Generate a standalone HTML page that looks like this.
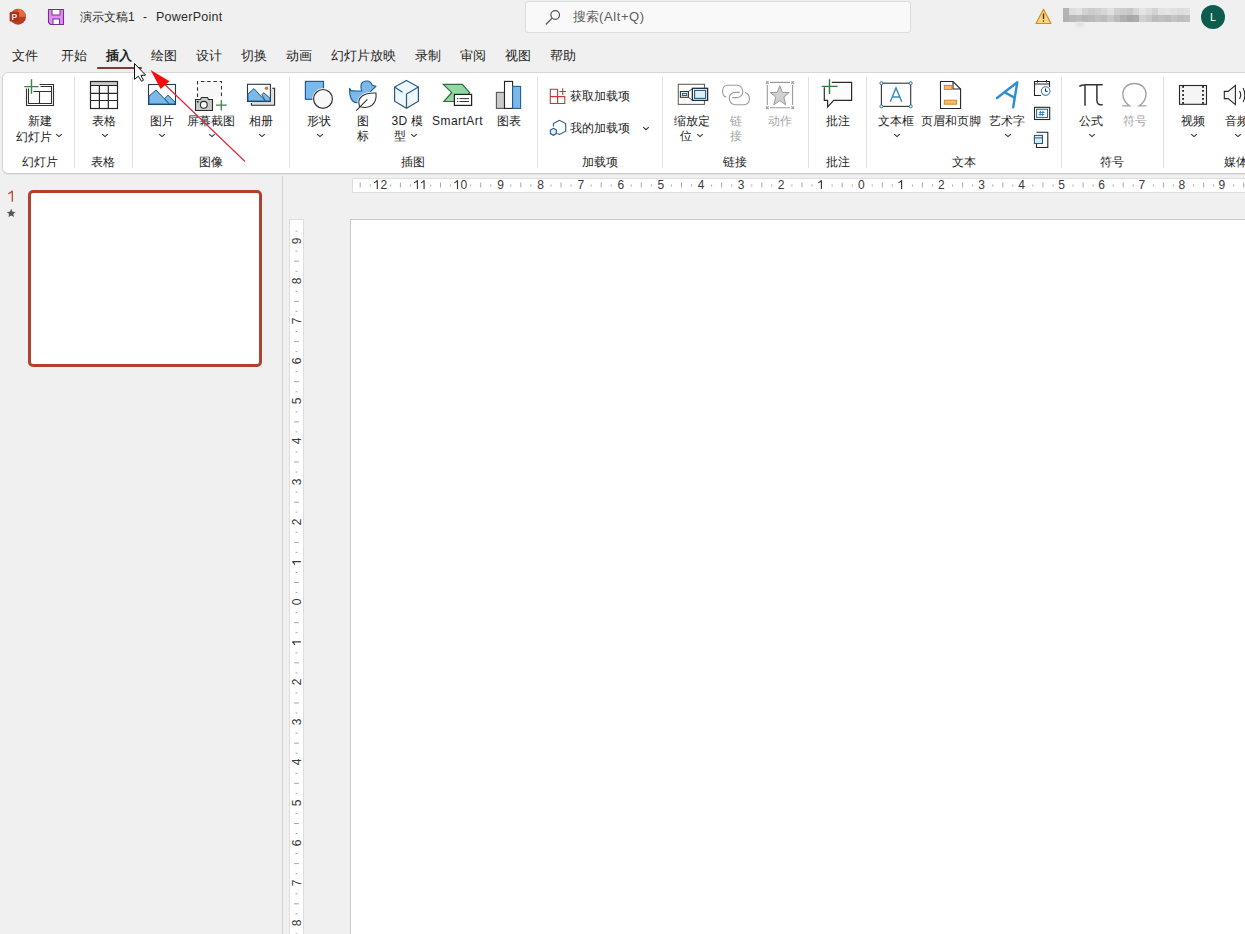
<!DOCTYPE html>
<html><head><meta charset="utf-8">
<style>
*{margin:0;padding:0;box-sizing:border-box}
html,body{width:1245px;height:934px;overflow:hidden;background:#f0f0f0;font-family:"Liberation Sans",sans-serif;color:#242424}
.a{position:absolute;white-space:nowrap}
.t13{font-size:13px;line-height:13px;font-weight:500}
.t12{font-size:12px;line-height:12px;font-weight:500}
.grey{color:#a6a6a6}
.lb{font-size:12px;line-height:12px;font-weight:500}
.rn{font-size:12px;line-height:12px;color:#3a3a3a}
svg{position:absolute;overflow:visible}
</style></head><body>
<!-- title bar -->
<div class="a t12" style="left:80px;top:11px;font-weight:400;color:#2b2b2b">演示文稿1</div>
<div class="a t12" style="left:143px;top:11px;font-weight:400">-</div>
<div class="a" style="left:156px;top:10.5px;font-size:12.5px;line-height:13px;letter-spacing:0.25px;color:#2b2b2b">PowerPoint</div>
<div class="a" style="left:525px;top:1px;width:386px;height:32px;background:#f9f9f9;border:1px solid #dcdcdc;border-radius:3px"></div>
<div class="a t13" style="left:573px;top:10px;color:#5e5e5e;font-weight:400">搜索<span style="letter-spacing:0.6px">(Alt+Q)</span></div>
<div class="a" style="left:1201px;top:5px;width:24px;height:24px;border-radius:50%;background:#0e5c4d;color:#fff;font-size:11px;line-height:24px;text-align:center">L</div>
<!-- tabs -->
<div class="a t13" style="left:12px;top:49px">文件</div>
<div class="a t13" style="left:61px;top:49px">开始</div>
<div class="a t13" style="left:106px;top:49px;font-weight:700">插入</div>
<div class="a t13" style="left:151px;top:49px">绘图</div>
<div class="a t13" style="left:196px;top:49px">设计</div>
<div class="a t13" style="left:241px;top:49px">切换</div>
<div class="a t13" style="left:286px;top:49px">动画</div>
<div class="a t13" style="left:331px;top:49px">幻灯片放映</div>
<div class="a t13" style="left:415px;top:49px">录制</div>
<div class="a t13" style="left:460px;top:49px">审阅</div>
<div class="a t13" style="left:505px;top:49px">视图</div>
<div class="a t13" style="left:550px;top:49px">帮助</div>
<div class="a" style="left:97px;top:67px;width:45px;height:2px;background:#80392e;border-radius:1px"></div>
<!-- ribbon -->
<div class="a" style="left:2px;top:72px;width:1260px;height:102px;background:#fff;border:1px solid #d6d6d6;border-bottom:1px solid #cbcbcb;border-radius:6px;box-shadow:0 1px 1px rgba(0,0,0,0.05)"></div>
<div class="a lb" style="left:-10px;top:115px;width:100px;text-align:center">新建</div>
<div class="a lb" style="left:16px;top:131px">幻灯片</div>
<div class="a lb" style="left:54px;top:115px;width:100px;text-align:center">表格</div>
<div class="a lb" style="left:112px;top:115px;width:100px;text-align:center">图片</div>
<div class="a lb" style="left:161px;top:115px;width:100px;text-align:center">屏幕截图</div>
<div class="a lb" style="left:211px;top:115px;width:100px;text-align:center">相册</div>
<div class="a lb" style="left:269px;top:115px;width:100px;text-align:center">形状</div>
<div class="a lb" style="left:313px;top:115px;width:100px;text-align:center">图</div>
<div class="a lb" style="left:313px;top:130px;width:100px;text-align:center">标</div>
<div class="a lb" style="left:391.5px;top:115px;letter-spacing:0.4px">3D</div><div class="a lb" style="left:410.5px;top:115px">模</div>
<div class="a lb" style="left:350px;top:130px;width:100px;text-align:center">型</div>
<div class="a lb" style="left:432px;top:115px;letter-spacing:0.45px">SmartArt</div>
<div class="a lb" style="left:458.5px;top:115px;width:100px;text-align:center">图表</div>
<div class="a lb" style="left:642px;top:115px;width:100px;text-align:center">缩放定</div>
<div class="a lb" style="left:636px;top:130px;width:100px;text-align:center">位</div>
<div class="a lb grey" style="left:686px;top:115px;width:100px;text-align:center">链</div>
<div class="a lb grey" style="left:686px;top:130px;width:100px;text-align:center">接</div>
<div class="a lb grey" style="left:730px;top:115px;width:100px;text-align:center">动作</div>
<div class="a lb" style="left:788px;top:115px;width:100px;text-align:center">批注</div>
<div class="a lb" style="left:846px;top:115px;width:100px;text-align:center">文本框</div>
<div class="a lb" style="left:901px;top:115px;width:100px;text-align:center">页眉和页脚</div>
<div class="a lb" style="left:957px;top:115px;width:100px;text-align:center">艺术字</div>
<div class="a lb" style="left:1041px;top:115px;width:100px;text-align:center">公式</div>
<div class="a lb grey" style="left:1085px;top:115px;width:100px;text-align:center">符号</div>
<div class="a lb" style="left:1143px;top:115px;width:100px;text-align:center">视频</div>
<div class="a lb" style="left:1187px;top:115px;width:100px;text-align:center">音频</div>
<div class="a lb" style="left:-10px;top:156px;width:100px;text-align:center">幻灯片</div>
<div class="a lb" style="left:53px;top:156px;width:100px;text-align:center">表格</div>
<div class="a lb" style="left:161px;top:156px;width:100px;text-align:center">图像</div>
<div class="a lb" style="left:363px;top:156px;width:100px;text-align:center">插图</div>
<div class="a lb" style="left:550px;top:156px;width:100px;text-align:center">加载项</div>
<div class="a lb" style="left:685px;top:156px;width:100px;text-align:center">链接</div>
<div class="a lb" style="left:788px;top:156px;width:100px;text-align:center">批注</div>
<div class="a lb" style="left:914px;top:156px;width:100px;text-align:center">文本</div>
<div class="a lb" style="left:1062px;top:156px;width:100px;text-align:center">符号</div>
<div class="a lb" style="left:1224px;top:156px">媒体</div>
<svg style="left:0;top:0" width="1" height="1"><path d="M56.2,134.1 L59.0,136.6 L61.8,134.1" fill="none" stroke="#2e2e2e" stroke-width="1.05"/></svg>
<svg style="left:0;top:0" width="1" height="1"><path d="M102.2,134.1 L105.0,136.6 L107.8,134.1" fill="none" stroke="#2e2e2e" stroke-width="1.05"/></svg>
<svg style="left:0;top:0" width="1" height="1"><path d="M159.2,134.1 L162.0,136.6 L164.8,134.1" fill="none" stroke="#2e2e2e" stroke-width="1.05"/></svg>
<svg style="left:0;top:0" width="1" height="1"><path d="M209.2,134.1 L212.0,136.6 L214.8,134.1" fill="none" stroke="#2e2e2e" stroke-width="1.05"/></svg>
<svg style="left:0;top:0" width="1" height="1"><path d="M259.2,134.1 L262.0,136.6 L264.8,134.1" fill="none" stroke="#2e2e2e" stroke-width="1.05"/></svg>
<svg style="left:0;top:0" width="1" height="1"><path d="M317.2,134.1 L320.0,136.6 L322.8,134.1" fill="none" stroke="#2e2e2e" stroke-width="1.05"/></svg>
<svg style="left:0;top:0" width="1" height="1"><path d="M411.2,134.1 L414.0,136.6 L416.8,134.1" fill="none" stroke="#2e2e2e" stroke-width="1.05"/></svg>
<svg style="left:0;top:0" width="1" height="1"><path d="M697.2,134.1 L700.0,136.6 L702.8,134.1" fill="none" stroke="#2e2e2e" stroke-width="1.05"/></svg>
<svg style="left:0;top:0" width="1" height="1"><path d="M894.2,134.1 L897.0,136.6 L899.8,134.1" fill="none" stroke="#2e2e2e" stroke-width="1.05"/></svg>
<svg style="left:0;top:0" width="1" height="1"><path d="M1005.2,134.1 L1008.0,136.6 L1010.8,134.1" fill="none" stroke="#2e2e2e" stroke-width="1.05"/></svg>
<svg style="left:0;top:0" width="1" height="1"><path d="M1089.2,134.1 L1092.0,136.6 L1094.8,134.1" fill="none" stroke="#2e2e2e" stroke-width="1.05"/></svg>
<svg style="left:0;top:0" width="1" height="1"><path d="M1191.2,134.1 L1194.0,136.6 L1196.8,134.1" fill="none" stroke="#2e2e2e" stroke-width="1.05"/></svg>
<svg style="left:0;top:0" width="1" height="1"><path d="M1235.2,134.1 L1238.0,136.6 L1240.8,134.1" fill="none" stroke="#2e2e2e" stroke-width="1.05"/></svg>
<div class="a" style="left:74px;top:77px;width:1px;height:91px;background:#e1e1e1"></div>
<div class="a" style="left:132px;top:77px;width:1px;height:91px;background:#e1e1e1"></div>
<div class="a" style="left:289px;top:77px;width:1px;height:91px;background:#e1e1e1"></div>
<div class="a" style="left:537px;top:77px;width:1px;height:91px;background:#e1e1e1"></div>
<div class="a" style="left:662px;top:77px;width:1px;height:91px;background:#e1e1e1"></div>
<div class="a" style="left:808px;top:77px;width:1px;height:91px;background:#e1e1e1"></div>
<div class="a" style="left:866px;top:77px;width:1px;height:91px;background:#e1e1e1"></div>
<div class="a" style="left:1061px;top:77px;width:1px;height:91px;background:#e1e1e1"></div>
<div class="a" style="left:1163px;top:77px;width:1px;height:91px;background:#e1e1e1"></div>
<!-- addins -->
<div class="a lb" style="left:570px;top:90px">获取加载项</div>
<div class="a lb" style="left:570px;top:122px">我的加载项</div>
<svg style="left:0;top:0" width="1" height="1"><path d="M643.2,127.2 L646.0,129.7 L648.8,127.2" fill="none" stroke="#2e2e2e" stroke-width="1.05"/></svg>
<!-- ICONS -->
<svg style="left:0;top:0" width="1245" height="934" viewBox="0 0 1245 934">
<!-- new slide -->
<g fill="none" stroke="#333" stroke-width="1.1">
<path d="M39.5,84.5 H53.5 V105.5 H26.5 V88.5"/>
<path d="M40.5,86.5 H51.5 V103.5 H28.5 V88.5"/>
<path d="M33.5,91.5 H51.5 M39.5,91.5 V103.5"/>
</g>
<g stroke="#3b8548" stroke-width="1.4" fill="none"><path d="M24.3,86.6 H38.6 M31.5,79.2 V93.8"/></g>
<!-- table -->
<rect x="90.5" y="81.5" width="27" height="4" fill="#c9c9c9"/>
<g fill="none" stroke="#262626" stroke-width="1.2">
<rect x="90.5" y="81.5" width="27" height="27"/>
<path d="M90.5,85.5 H117.5 M90.5,93.3 H117.5 M90.5,100.5 H117.5 M99.4,85.5 V108.5 M108.3,85.5 V108.5"/>
</g>
<!-- picture -->
<rect x="148.5" y="84.5" width="27" height="20" fill="#fff" stroke="#1f3a52" stroke-width="1.1"/>
<path d="M149,96.2 L156,90 L169.4,104 H149 Z" fill="#7cb9e8" stroke="#1e5a8c" stroke-width="1"/>
<path d="M164.7,98.5 L168,95.2 L175,102 V104 H169.4 Z" fill="#7cb9e8" stroke="#1e5a8c" stroke-width="1"/>
<!-- screenshot -->
<path d="M197.5,97 V81.5 H221.5 V97" fill="#f7f7f7" stroke="#333" stroke-width="1.1" stroke-dasharray="3.5,2.8"/>
<path d="M195.5,99.5 H200.5 L201.5,97.5 H207.5 L208.5,99.5 H212.5 V110.5 H195.5 Z" fill="#c9c9c9" stroke="#2a2a2a" stroke-width="1.1"/>
<circle cx="203.8" cy="104.8" r="3.4" fill="#fff" stroke="#2a2a2a" stroke-width="1.1"/>
<rect x="197" y="101" width="1.6" height="1.6" fill="#222"/>
<path d="M216,105.1 H226.8 M221.3,100 V110.6" stroke="#3b8548" stroke-width="1.3"/>
<!-- album -->
<path d="M272.2,88.3 H274.6 V105.2 H251.4 V103" fill="#e0e0e0" stroke="#2a2a2a" stroke-width="1.1"/>
<rect x="247.5" y="84.3" width="22.9" height="17.2" fill="#fff" stroke="#1f3a52" stroke-width="1.1"/>
<path d="M248,94.1 L254,88.6 L265.3,101 H248 Z" fill="#7cb9e8" stroke="#1e5a8c" stroke-width="1"/>
<path d="M261.9,94.8 L263.6,92.7 L270,98.2 V101 H265.3 Z" fill="#7cb9e8" stroke="#1e5a8c" stroke-width="1"/>
<circle cx="266.5" cy="88.3" r="1.7" fill="#c07a3a"/>
<!-- shapes -->
<rect x="305.4" y="81.4" width="18.1" height="17.9" fill="#7cb9e8" stroke="#1d5d99" stroke-width="1.2"/>
<circle cx="323" cy="98.9" r="10.6" fill="#fff"/>
<circle cx="323" cy="98.9" r="9.4" fill="#f8f8f8" stroke="#333" stroke-width="1.2"/>
<!-- icons duck+leaf -->
<path d="M349.6,88.4 L350.9,90.6 C354,91.2 358,91.1 361.8,90.9 C361.1,89.6 360.9,88 360.9,86.6 A5.7,5.7 0 0 1 372.1,85.2 L376,86.4 L371.2,90.9 C370.5,93 368.5,94.5 367.2,95.8 C365,99.5 361,103 356.4,102.7 C351.5,102 349.4,96 349.6,88.4 Z" fill="#7cb9e8" stroke="#1d5d99" stroke-width="1.1" stroke-linejoin="round"/>
<path d="M359.5,106.5 C356.5,97 364,92.5 376,93 C377,103 371,110 359.5,106.5 Z" fill="#fff" stroke="#fff" stroke-width="2.6"/>
<path d="M359.5,106.5 C356.5,97 364,92.5 376,93 C377,103 371,110 359.5,106.5 Z" fill="#fff" stroke="#333" stroke-width="1.1"/>
<path d="M356.2,110.6 L367.4,99.4" stroke="#333" stroke-width="1.1"/>
<!-- 3D cube -->
<path d="M406.5,80.4 L418.4,87 V101.2 L406.5,108.2 L394.6,101.2 V87 Z" fill="#eef7fd" stroke="#2a5a80" stroke-width="1.2"/>
<path d="M394.6,87 L402.5,92.2 M418.4,87 L406.5,94.1 V108.2" fill="none" stroke="#2a5a80" stroke-width="1.2"/>
<!-- SmartArt -->
<path d="M443.3,84.3 H462.3 L469.7,92.7 L462.3,101.5 H443.8 L451.7,92.7 Z" fill="#92d8a2" stroke="#2e6b3e" stroke-width="1.2"/>
<rect x="454.4" y="94.4" width="17.2" height="11" fill="#fff" stroke="#222" stroke-width="1.2"/>
<path d="M457,98.6 H458.3 M459.5,98.6 H469 M457,101.5 H458.3 M459.5,101.5 H469" stroke="#333" stroke-width="1"/>
<!-- chart -->
<rect x="496.4" y="92.4" width="8.1" height="16" fill="#c9c9c9" stroke="#555" stroke-width="1.1"/>
<rect x="504.5" y="81.4" width="8.1" height="27" fill="#fff" stroke="#222" stroke-width="1.1"/>
<rect x="512.6" y="86.4" width="8" height="22" fill="#7cb9e8" stroke="#1d5d99" stroke-width="1.1"/>
<!-- get addins -->
<g fill="none" stroke="#c0393b" stroke-width="1.1">
<path d="M557.6,96.6 V89.3 H550.3 V103.5 H564.8 V96.6 H550.3 M557.6,96.6 V103.5"/>
<path d="M559.4,91.5 H566 M562.7,88.2 V94.8"/>
</g>
<!-- my addins -->
<path d="M553.4,126.5 V123.6 L559.4,120.3 L565.7,123.5 V131.2 L559.4,134.4 L557.5,133.5" fill="none" stroke="#2a5a80" stroke-width="1.1"/>
<path d="M553.4,128.3 L556.4,130 V133.6 L553.4,135.3 L550.4,133.6 V130 Z" fill="#dcefff" stroke="#2a5a80" stroke-width="1.1"/>
<!-- zoom -->
<rect x="678.3" y="84.3" width="26.2" height="20.1" fill="#fff" stroke="#6b625c" stroke-width="1.1"/>
<path d="M688.4,91.5 L692.4,88.8 M688.4,97.3 L692.4,100.2" stroke="#555" stroke-width="1"/>
<rect x="680.4" y="91.5" width="8" height="5.8" fill="#fff" stroke="#333" stroke-width="1.1"/>
<rect x="682.3" y="93.4" width="4.4" height="2.1" fill="#d8f0fc" stroke="#2a5a80" stroke-width="1"/>
<rect x="692.4" y="88.3" width="15.2" height="12.1" fill="#fff" stroke="#1e2f3a" stroke-width="1.3"/>
<rect x="694.6" y="90.4" width="11" height="8" fill="#d8f0fc" stroke="#2a5a80" stroke-width="1.1"/>
<!-- link grey -->
<g fill="none" stroke="#9c9c9c" stroke-width="1.1">
<path d="M726.5,97.3 C721,95.5 721,85.5 728,85.3 H736.8 C743,85.5 744,93 741,96 C740,97.2 738.5,97.6 736.5,97.6 H732.3"/>
<path d="M745,92.6 C751,94.5 751,104.5 744,104.7 H735.2 C729,104.5 728,97 731,94 C732,92.8 733.5,92.4 735.5,92.4 H739.7"/>
</g>
<!-- action grey -->
<g fill="none" stroke="#9c9c9c" stroke-width="1.1">
<path d="M770,82.4 H790 M767.3,85 V105 M792.6,85 V105 M770,107.7 H790"/>
<path d="M766,81.2 L768.6,83.8 M766,83.8 L768.6,81.2 M791.4,81.2 L794,83.8 M791.4,83.8 L794,81.2 M766,106.4 L768.6,109 M766,109 L768.6,106.4 M791.4,106.4 L794,109 M791.4,109 L794,106.4"/>
</g>
<path d="M779.8,85.8 L782.4,92.3 L789.2,92.6 L783.9,97 L785.7,104.8 L779.8,100.6 L773.9,104.8 L775.7,97 L770.4,92.6 L777.2,92.3 Z" fill="#d0d0d0" stroke="#9a9a9a" stroke-width="1"/>
<!-- comment -->
<path d="M831.8,82.4 H851.6 V100.3 H833.7 L827.6,107 V100.3 H824.3 V87.2" fill="#fbfbfb" stroke="#2a2a2a" stroke-width="1.2"/>
<path d="M821.8,86.4 H837.6 M829.5,79.3 V94.1" stroke="#2f7a3e" stroke-width="1.4"/>
<!-- textbox -->
<rect x="881.4" y="83.2" width="29.3" height="23.2" fill="#fdfdfd" stroke="#333" stroke-width="1.1"/>
<g fill="#fff" stroke="#2a7090" stroke-width="1">
<circle cx="881.4" cy="83.2" r="1.5"/><circle cx="910.7" cy="83.2" r="1.5"/><circle cx="881.4" cy="106.4" r="1.5"/><circle cx="910.7" cy="106.4" r="1.5"/>
</g>
<path d="M890.3,101.7 L896,87.9 L901.8,101.7 M892.4,97 H899.6" fill="none" stroke="#3a8abf" stroke-width="1.4"/>
<!-- header footer -->
<path d="M940.5,81.5 H953 L960.6,89 V108.5 H940.5 Z" fill="#fff" stroke="#262626" stroke-width="1.1"/>
<path d="M953,81.5 V89 H960.6" fill="none" stroke="#262626" stroke-width="1.1"/>
<rect x="944.3" y="85.4" width="7.6" height="4" fill="#f6bb6a" stroke="#d8861e" stroke-width="1"/>
<rect x="944.3" y="100.2" width="12.3" height="4" fill="#f6bb6a" stroke="#d8861e" stroke-width="1"/>
<!-- wordart -->
<path d="M997,98 L1017.3,82.3 L1013.2,107.3 M1005.5,92.7 L1014.4,97.6" fill="none" stroke="#2e8fd0" stroke-width="2.4" stroke-linecap="round" stroke-linejoin="round"/>
<!-- date/time -->
<path d="M1041,95.5 H1034.5 V81.5 H1049.5 V87" fill="none" stroke="#262626" stroke-width="1.1"/>
<path d="M1034.5,84 H1049.5 M1037.5,80 V82.5 M1046.5,80 V82.5" stroke="#262626" stroke-width="1"/>
<circle cx="1045.7" cy="91.1" r="4.3" fill="#fff" stroke="#2e7fc0" stroke-width="1.1"/>
<path d="M1045.5,88.5 V91.3 H1047.8" fill="none" stroke="#262626" stroke-width="1"/>
<!-- slide number -->
<rect x="1034.5" y="107.3" width="15.2" height="12.2" fill="#fff" stroke="#262626" stroke-width="1.1"/>
<rect x="1036.6" y="109.2" width="11" height="8.2" fill="#fff" stroke="#2a5a80" stroke-width="1"/>
<path d="M1040.5,110.8 L1040,116 M1043,110.8 L1042.5,116 M1038.8,112.4 H1044.6 M1038.5,114.5 H1044.3" stroke="#2e7fc0" stroke-width="0.9"/>
<!-- object -->
<path d="M1036.5,132.3 H1047.8 V147.5 H1036.5 V144" fill="none" stroke="#262626" stroke-width="1.1"/>
<rect x="1034.4" y="135.4" width="8.1" height="8.1" fill="#d8f0fc" stroke="#2a5a80" stroke-width="1.1"/>
<path d="M1034.4,137.9 H1042.5" stroke="#2a5a80" stroke-width="1"/>
<!-- pi -->
<path d="M1079.3,86.5 C1081,85 1083,84.8 1086,84.8 H1102.7" fill="none" stroke="#333" stroke-width="1.5"/>
<path d="M1085,85 V105.8" stroke="#333" stroke-width="1.5"/>
<path d="M1096.9,85 V100.5 C1097,104 1099,105 1102.7,104.8" fill="none" stroke="#333" stroke-width="1.5"/>
<!-- omega grey -->
<path d="M1122.2,105.9 H1129.6 C1124,102 1122.8,97.5 1122.8,94 C1122.8,88 1127.5,83.5 1134.4,83.5 C1141.3,83.5 1146,88 1146,94 C1146,97.5 1144.8,102 1139.2,105.9 H1146.5" fill="none" stroke="#a3a3a3" stroke-width="1.4"/>
<!-- video -->
<rect x="1179.5" y="85.5" width="27" height="18.8" fill="#f5f5f5" stroke="#262626" stroke-width="1.1"/>
<g fill="#222">
<rect x="1182.2" y="86" width="1.8" height="1.8"/><rect x="1182.2" y="90" width="1.8" height="1.8"/><rect x="1182.2" y="94.1" width="1.8" height="1.8"/><rect x="1182.2" y="98" width="1.8" height="1.8"/><rect x="1182.2" y="102" width="1.8" height="1.8"/>
<rect x="1202.1" y="86" width="1.8" height="1.8"/><rect x="1202.1" y="90" width="1.8" height="1.8"/><rect x="1202.1" y="94.1" width="1.8" height="1.8"/><rect x="1202.1" y="98" width="1.8" height="1.8"/><rect x="1202.1" y="102" width="1.8" height="1.8"/>
</g>
<!-- audio -->
<path d="M1224.3,91.4 H1228.1 L1235.4,85.4 V104.6 L1228.1,98.6 H1224.3 Z" fill="#f5f5f5" stroke="#262626" stroke-width="1.1"/>
<path d="M1239.5,91 C1241,93.5 1241,96.5 1239.5,99 M1243,88 C1245.5,92 1245.5,98 1243,102" fill="none" stroke="#262626" stroke-width="1.1"/>
</svg>

<!-- thumbnails -->
<div class="a" style="left:282px;top:176px;width:1px;height:758px;background:#d2d2d2"></div>
<div class="a" style="left:28px;top:190px;width:234px;height:177px;background:#fff;border:3px solid #b1402f;border-radius:5px"></div>
<svg style="left:0;top:0" width="1" height="1"><path d="M12.3,190.8 V201.8 M12.3,190.8 C11.2,192.3 9.8,193.2 8.3,193.8" fill="none" stroke="#b8492d" stroke-width="1.3"/></svg>
<!-- rulers -->
<div class="a" style="left:352px;top:178px;width:900px;height:15px;background:#fff;border:1px solid #dedede"></div>
<div class="a" style="left:289px;top:219px;width:15px;height:720px;background:#fff;border:1px solid #dedede"></div>
<!-- rulerdetail -->
<div class="a rn" style="left:368.8px;top:179px;width:30px;text-align:center">2</div>
<div class="a rn" style="left:448.9px;top:179px;width:30px;text-align:center">0</div>
<div class="a rn" style="left:485.7px;top:179px;width:30px;text-align:center">9</div>
<div class="a rn" style="left:525.7px;top:179px;width:30px;text-align:center">8</div>
<div class="a rn" style="left:565.8px;top:179px;width:30px;text-align:center">7</div>
<div class="a rn" style="left:605.9px;top:179px;width:30px;text-align:center">6</div>
<div class="a rn" style="left:645.9px;top:179px;width:30px;text-align:center">5</div>
<div class="a rn" style="left:686.0px;top:179px;width:30px;text-align:center">4</div>
<div class="a rn" style="left:726.1px;top:179px;width:30px;text-align:center">3</div>
<div class="a rn" style="left:766.2px;top:179px;width:30px;text-align:center">2</div>
<div class="a rn" style="left:846.3px;top:179px;width:30px;text-align:center">0</div>
<div class="a rn" style="left:926.4px;top:179px;width:30px;text-align:center">2</div>
<div class="a rn" style="left:966.5px;top:179px;width:30px;text-align:center">3</div>
<div class="a rn" style="left:1006.6px;top:179px;width:30px;text-align:center">4</div>
<div class="a rn" style="left:1046.6px;top:179px;width:30px;text-align:center">5</div>
<div class="a rn" style="left:1086.7px;top:179px;width:30px;text-align:center">6</div>
<div class="a rn" style="left:1126.8px;top:179px;width:30px;text-align:center">7</div>
<div class="a rn" style="left:1166.9px;top:179px;width:30px;text-align:center">8</div>
<div class="a rn" style="left:1206.9px;top:179px;width:30px;text-align:center">9</div>
<div class="a rn" style="left:281.5px;top:234.8px;width:30px;text-align:center;transform:rotate(-90deg)">9</div>
<div class="a rn" style="left:281.5px;top:274.9px;width:30px;text-align:center;transform:rotate(-90deg)">8</div>
<div class="a rn" style="left:281.5px;top:315.1px;width:30px;text-align:center;transform:rotate(-90deg)">7</div>
<div class="a rn" style="left:281.5px;top:355.2px;width:30px;text-align:center;transform:rotate(-90deg)">6</div>
<div class="a rn" style="left:281.5px;top:395.3px;width:30px;text-align:center;transform:rotate(-90deg)">5</div>
<div class="a rn" style="left:281.5px;top:435.4px;width:30px;text-align:center;transform:rotate(-90deg)">4</div>
<div class="a rn" style="left:281.5px;top:475.5px;width:30px;text-align:center;transform:rotate(-90deg)">3</div>
<div class="a rn" style="left:281.5px;top:515.7px;width:30px;text-align:center;transform:rotate(-90deg)">2</div>
<div class="a rn" style="left:281.5px;top:595.9px;width:30px;text-align:center;transform:rotate(-90deg)">0</div>
<div class="a rn" style="left:281.5px;top:676.1px;width:30px;text-align:center;transform:rotate(-90deg)">2</div>
<div class="a rn" style="left:281.5px;top:716.3px;width:30px;text-align:center;transform:rotate(-90deg)">3</div>
<div class="a rn" style="left:281.5px;top:756.4px;width:30px;text-align:center;transform:rotate(-90deg)">4</div>
<div class="a rn" style="left:281.5px;top:796.5px;width:30px;text-align:center;transform:rotate(-90deg)">5</div>
<div class="a rn" style="left:281.5px;top:836.6px;width:30px;text-align:center;transform:rotate(-90deg)">6</div>
<div class="a rn" style="left:281.5px;top:876.7px;width:30px;text-align:center;transform:rotate(-90deg)">7</div>
<div class="a rn" style="left:281.5px;top:916.9px;width:30px;text-align:center;transform:rotate(-90deg)">8</div>
<svg style="left:0;top:0" width="1245" height="934"><path d="M360.2,182.5V187.5 M370.2,184.5V186.5 M390.3,184.5V186.5 M400.4,182.5V187.5 M410.4,184.5V186.5 M430.5,184.5V186.5 M440.5,182.5V187.5 M450.6,184.5V186.5 M470.6,184.5V186.5 M480.7,182.5V187.5 M490.7,184.5V186.5 M510.8,184.5V186.5 M520.8,182.5V187.5 M530.9,184.5V186.5 M551.0,184.5V186.5 M561.0,182.5V187.5 M571.0,184.5V186.5 M591.1,184.5V186.5 M601.2,182.5V187.5 M611.2,184.5V186.5 M631.3,184.5V186.5 M641.3,182.5V187.5 M651.4,184.5V186.5 M671.4,184.5V186.5 M681.5,182.5V187.5 M691.5,184.5V186.5 M711.6,184.5V186.5 M721.6,182.5V187.5 M731.7,184.5V186.5 M751.8,184.5V186.5 M761.8,182.5V187.5 M771.8,184.5V186.5 M791.9,184.5V186.5 M802.0,182.5V187.5 M812.0,184.5V186.5 M832.1,184.5V186.5 M842.1,182.5V187.5 M852.2,184.5V186.5 M872.2,184.5V186.5 M882.3,182.5V187.5 M892.3,184.5V186.5 M912.4,184.5V186.5 M922.4,182.5V187.5 M932.5,184.5V186.5 M952.6,184.5V186.5 M962.6,182.5V187.5 M972.6,184.5V186.5 M992.7,184.5V186.5 M1002.8,182.5V187.5 M1012.8,184.5V186.5 M1032.9,184.5V186.5 M1042.9,182.5V187.5 M1053.0,184.5V186.5 M1073.0,184.5V186.5 M1083.1,182.5V187.5 M1093.1,184.5V186.5 M1113.2,184.5V186.5 M1123.2,182.5V187.5 M1133.3,184.5V186.5 M1153.4,184.5V186.5 M1163.4,182.5V187.5 M1173.4,184.5V186.5 M1193.5,184.5V186.5 M1203.6,182.5V187.5 M1213.6,184.5V186.5 M1233.7,184.5V186.5 M1243.7,182.5V187.5" stroke="#a8a8a8" stroke-width="1"/><path d="M295.5,231.1H297.5 M295.5,251.2H297.5 M294,261.2H299 M295.5,271.3H297.5 M295.5,291.4H297.5 M294,301.4H299 M295.5,311.4H297.5 M295.5,331.5H297.5 M294,341.6H299 M295.5,351.6H297.5 M295.5,371.7H297.5 M294,381.7H299 M295.5,391.8H297.5 M295.5,411.8H297.5 M294,421.9H299 M295.5,431.9H297.5 M295.5,452.0H297.5 M294,462.0H299 M295.5,472.1H297.5 M295.5,492.2H297.5 M294,502.2H299 M295.5,512.2H297.5 M295.5,532.3H297.5 M294,542.4H299 M295.5,552.4H297.5 M295.5,572.5H297.5 M294,582.5H299 M295.5,592.6H297.5 M295.5,612.6H297.5 M294,622.7H299 M295.5,632.7H297.5 M295.5,652.8H297.5 M294,662.8H299 M295.5,672.9H297.5 M295.5,693.0H297.5 M294,703.0H299 M295.5,713.0H297.5 M295.5,733.1H297.5 M294,743.2H299 M295.5,753.2H297.5 M295.5,773.3H297.5 M294,783.3H299 M295.5,793.4H297.5 M295.5,813.4H297.5 M294,823.5H299 M295.5,833.5H297.5 M295.5,853.6H297.5 M294,863.6H299 M295.5,873.7H297.5 M295.5,893.8H297.5 M294,903.8H299 M295.5,913.8H297.5 M295.5,933.9H297.5" stroke="#a8a8a8" stroke-width="1"/><path d="M377.3,180.3V188.9M377.3,180.3C376.5,181.6 375.3,182.4 374.1,182.8M417.4,180.3V188.9M417.4,180.3C416.6,181.6 415.4,182.4 414.2,182.8M424.1,180.3V188.9M424.1,180.3C423.3,181.6 422.1,182.4 420.9,182.8M457.5,180.3V188.9M457.5,180.3C456.7,181.6 455.5,182.4 454.3,182.8M821.4,180.3V188.9M821.4,180.3C820.6,181.6 819.4,182.4 818.2,182.8M901.6,180.3V188.9M901.6,180.3C900.8,181.6 899.6,182.4 898.4,182.8M292.3,561.6H300.9M292.3,561.6C293.6,562.4 294.4,563.6 294.8,564.8M292.3,641.8H300.9M292.3,641.8C293.6,642.6 294.4,643.8 294.8,645.0" fill="none" stroke="#3a3a3a" stroke-width="1.15"/></svg>
<!-- slide -->
<div class="a" style="left:350px;top:219px;width:900px;height:720px;background:#fff;border:1px solid #c8c8c8"></div>
<!-- overlay -->
<svg style="left:0;top:0" width="1245" height="934">
<!-- PowerPoint logo -->
<defs>
<linearGradient id="pg" x1="0" y1="0" x2="1" y2="1"><stop offset="0" stop-color="#d9582f"/><stop offset="1" stop-color="#a8321b"/></linearGradient>
</defs>
<circle cx="18" cy="16.7" r="8" fill="url(#pg)"/>
<path d="M18,8.7 A8,8 0 0 1 26,16.7 H18 Z" fill="#e46a44"/>
<rect x="9.6" y="12" width="9.5" height="9.5" rx="1" fill="#a8321b"/>
<text x="14.4" y="20" font-family="Liberation Sans" font-size="8.5" font-weight="bold" fill="#fbe3d3" text-anchor="middle">P</text>
<!-- save -->
<path d="M48.5,9.5 H63.5 V24.5 H50.5 L48.5,22.5 Z" fill="#dd8ef0" stroke="#7a2c96" stroke-width="1.1"/>
<rect x="52" y="9.5" width="8" height="5.5" fill="#fff" stroke="#7a2c96" stroke-width="1"/>
<rect x="53" y="19" width="6.5" height="5.5" fill="#fff" stroke="#7a2c96" stroke-width="1"/>
<!-- search -->
<circle cx="555.2" cy="15" r="4.3" fill="none" stroke="#555" stroke-width="1.2"/>
<path d="M552.2,18.1 L546.3,24" stroke="#555" stroke-width="1.3" stroke-linecap="round"/>
<!-- warning -->
<path d="M1043.5,9.2 L1051,23.5 H1036 Z" fill="#fbd67c" stroke="#d9891a" stroke-width="1.2" stroke-linejoin="round"/>
<path d="M1043.5,13.5 V19" stroke="#333" stroke-width="1.4"/>
<circle cx="1043.5" cy="21" r="0.8" fill="#333"/>
<!-- red arrow -->
<path d="M157,77 L245,161.5" stroke="#d9283a" stroke-width="1.15"/>
<path d="M150.6,70 L169.5,81.2 L160.6,89 Z" fill="#ff0a0a"/>
<!-- cursor -->
<path d="M134.5,63.5 V79.3 L138.4,76.2 L141.5,81.3 L143.5,80.2 L140.9,75.4 L145.6,75.1 Z" fill="#fff" stroke="#111" stroke-width="1" stroke-linejoin="round"/>
<!-- star -->
<path d="M11.2,208.8 L12.5,211.7 L15.6,212 L13.3,214.1 L14,217.1 L11.2,215.5 L8.4,217.1 L9.1,214.1 L6.8,212 L9.9,211.7 Z" fill="#555"/>
</svg>
<!-- blurred name -->
<div class="a" style="left:1063px;top:8px;width:127px;height:14px;overflow:hidden;filter:blur(0.7px)">
<div class="a" style="left:0.00px;top:0;width:6.85px;height:7px;background:#b4b4b4"></div>
<div class="a" style="left:0.00px;top:7px;width:6.85px;height:7px;background:#b2b2b2"></div>
<div class="a" style="left:6.35px;top:0;width:6.85px;height:7px;background:#dcdcdc"></div>
<div class="a" style="left:6.35px;top:7px;width:6.85px;height:7px;background:#b8b8b8"></div>
<div class="a" style="left:12.70px;top:0;width:6.85px;height:7px;background:#e2e2e2"></div>
<div class="a" style="left:12.70px;top:7px;width:6.85px;height:7px;background:#bcbcbc"></div>
<div class="a" style="left:19.05px;top:0;width:6.85px;height:7px;background:#d2d2d2"></div>
<div class="a" style="left:19.05px;top:7px;width:6.85px;height:7px;background:#b6b6b6"></div>
<div class="a" style="left:25.40px;top:0;width:6.85px;height:7px;background:#cccccc"></div>
<div class="a" style="left:25.40px;top:7px;width:6.85px;height:7px;background:#bababa"></div>
<div class="a" style="left:31.75px;top:0;width:6.85px;height:7px;background:#d0d0d0"></div>
<div class="a" style="left:31.75px;top:7px;width:6.85px;height:7px;background:#c0c0c0"></div>
<div class="a" style="left:38.10px;top:0;width:6.85px;height:7px;background:#d6d6d6"></div>
<div class="a" style="left:38.10px;top:7px;width:6.85px;height:7px;background:#bcbcbc"></div>
<div class="a" style="left:44.45px;top:0;width:6.85px;height:7px;background:#e0e0e0"></div>
<div class="a" style="left:44.45px;top:7px;width:6.85px;height:7px;background:#c8c8c8"></div>
<div class="a" style="left:50.80px;top:0;width:6.85px;height:7px;background:#d0d0d0"></div>
<div class="a" style="left:50.80px;top:7px;width:6.85px;height:7px;background:#bcbcbc"></div>
<div class="a" style="left:57.15px;top:0;width:6.85px;height:7px;background:#cccccc"></div>
<div class="a" style="left:57.15px;top:7px;width:6.85px;height:7px;background:#b0b0b0"></div>
<div class="a" style="left:63.50px;top:0;width:6.85px;height:7px;background:#c8c8c8"></div>
<div class="a" style="left:63.50px;top:7px;width:6.85px;height:7px;background:#a8a8a8"></div>
<div class="a" style="left:69.85px;top:0;width:6.85px;height:7px;background:#d6d6d6"></div>
<div class="a" style="left:69.85px;top:7px;width:6.85px;height:7px;background:#acacac"></div>
<div class="a" style="left:76.20px;top:0;width:6.85px;height:7px;background:#e4e4e4"></div>
<div class="a" style="left:76.20px;top:7px;width:6.85px;height:7px;background:#d0d0d0"></div>
<div class="a" style="left:82.55px;top:0;width:6.85px;height:7px;background:#dcdcdc"></div>
<div class="a" style="left:82.55px;top:7px;width:6.85px;height:7px;background:#c8c8c8"></div>
<div class="a" style="left:88.90px;top:0;width:6.85px;height:7px;background:#d2d2d2"></div>
<div class="a" style="left:88.90px;top:7px;width:6.85px;height:7px;background:#bcbcbc"></div>
<div class="a" style="left:95.25px;top:0;width:6.85px;height:7px;background:#e2e2e2"></div>
<div class="a" style="left:95.25px;top:7px;width:6.85px;height:7px;background:#c0c0c0"></div>
<div class="a" style="left:101.60px;top:0;width:6.85px;height:7px;background:#e4e4e4"></div>
<div class="a" style="left:101.60px;top:7px;width:6.85px;height:7px;background:#bcbcbc"></div>
<div class="a" style="left:107.95px;top:0;width:6.85px;height:7px;background:#e0e0e0"></div>
<div class="a" style="left:107.95px;top:7px;width:6.85px;height:7px;background:#c4c4c4"></div>
<div class="a" style="left:114.30px;top:0;width:6.85px;height:7px;background:#dcdcdc"></div>
<div class="a" style="left:114.30px;top:7px;width:6.85px;height:7px;background:#bebebe"></div>
<div class="a" style="left:120.65px;top:0;width:6.85px;height:7px;background:#e0e0e0"></div>
<div class="a" style="left:120.65px;top:7px;width:6.85px;height:7px;background:#c2c2c2"></div>
</div>
<div class="a" style="left:1076px;top:22px;width:8px;height:5px;background:#e2e2e2;filter:blur(0.8px)"></div>
</body></html>
